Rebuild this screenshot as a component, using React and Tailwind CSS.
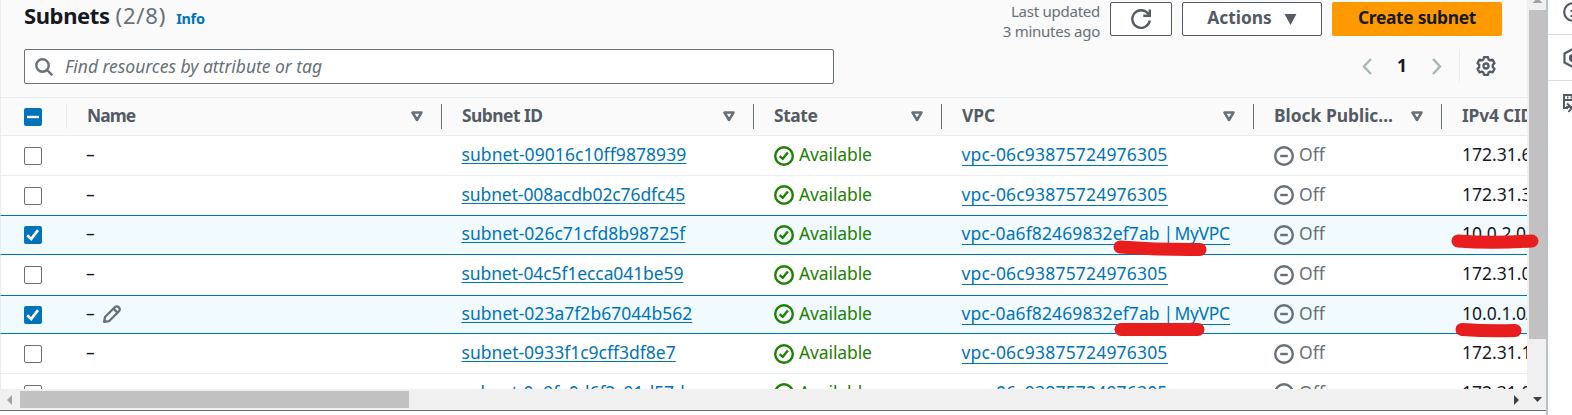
const rows = [
  { id: 'subnet-09016c10ff9878939', vpc: 'vpc-06c93875724976305', ip: '172.31.64.0/20', h: 'h-[40px]', pt: 'pt-[10px]', line: 'border-b-[#eaeded]', track: 'tracking-[0.07px]' },
  { id: 'subnet-008acdb02c76dfc45', vpc: 'vpc-06c93875724976305', ip: '172.31.32.0/20', h: 'h-[40px]', pt: 'pt-[10px]', line: 'border-b-[#0073bb]', track: 'tracking-[-0.1px]', up: true },
  { id: 'subnet-026c71cfd8b98725f', vpc: 'vpc-0a6f82469832ef7ab', name: 'MyVPC', ip: '10.0.2.0/24', h: 'h-[39px]', pt: 'pt-[9px]', line: 'border-b-[#0073bb]', track: 'tracking-[0.03px]', sel: true },
  { id: 'subnet-04c5f1ecca041be59', vpc: 'vpc-06c93875724976305', ip: '172.31.0.0/20', h: 'h-[41px]', pt: 'pt-[10px]', line: 'border-b-[#0073bb]', track: 'tracking-[-0.1px]' },
  { id: 'subnet-023a7f2b67044b562', vpc: 'vpc-0a6f82469832ef7ab', name: 'MyVPC', ip: '10.0.1.0/24', h: 'h-[38px]', pt: 'pt-[9px]', line: 'border-b-[#0073bb]', track: 'tracking-[0.03px]', sel: true, edit: true, up: true },
  { id: 'subnet-0933f1c9cff3df8e7', vpc: 'vpc-06c93875724976305', ip: '172.31.16.0/20', h: 'h-[40px]', pt: 'pt-[10px]', line: 'border-b-[#eaeded]', track: 'tracking-normal' },
  { id: 'subnet-0a9fe0d6f2c91d57d', vpc: 'vpc-06c93875724976305', ip: '172.31.80.0/20', h: 'h-[40px]', pt: 'pt-[10px]', line: 'border-b-[#eaeded]', track: 'tracking-[-0.08px]', up: true },
];

function Check({ state }) {
  if (!state) return <span className="block size-[18px] rounded-[2px] border border-[#687078] bg-white" />;
  return (
    <span className="block size-[18px] rounded-[2px] bg-[#0073bb]">
      <svg viewBox="0 0 18 18" className="block size-full" fill="none" stroke="white">
        {state === 'some' ? <path d="M3 9h12" strokeWidth="2.4" /> : <path d="M3.2 9.2 7.2 13 14 4.2" strokeWidth="2.7" />}
      </svg>
    </span>
  );
}

function StatusIcon({ ok, up }) {
  return (
    <svg viewBox="0 0 20 20" className={`${up ? '-mt-px' : ''} block size-5 shrink-0`} fill="none" stroke="currentColor" strokeWidth="2.4">
      <circle cx="10" cy="10" r="8.8" />
      {ok ? <path d="M5.6 10.2 8.7 12.8 13.9 6.6" /> : <path d="M6.2 10h7.6" />}
    </svg>
  );
}

function HeadCell({ w, label, track = 'tracking-normal', sort = true }) {
  return (
    <div className={`${w} flex h-full shrink-0 items-center pl-[20px]`}>
      <span className={`${track} flex-1 whitespace-nowrap pb-[3px] text-[17.4px] font-bold leading-5 text-[#545b64]`}>{label}</span>
      {sort && (
        <svg viewBox="0 0 12 11" className="mr-[18px] block h-[11px] w-[12px]" fill="none" stroke="#687078" strokeWidth="2.5" strokeLinejoin="round">
          <path d="M1.5 1.5h9L6 9z" />
        </svg>
      )}
      {sort && <span className="h-[25px] w-px bg-[#687078]" />}
    </div>
  );
}

function Row({ r }) {
  return (
    <div className={`${r.h} ${r.pt} ${r.line} ${r.sel ? 'bg-[#f1faff]' : 'bg-white'} flex shrink-0 items-start overflow-hidden border-b border-l border-l-[#eaeded] text-[17.5px] leading-4`}>
      <div className="w-[66px] shrink-0 pl-[23px] pt-px"><Check state={r.sel} /></div>
      <div className="flex w-[375px] shrink-0 gap-[7px] pl-[19px] text-[#16191f]">
        <span className="w-[10px]">–</span>
        {r.edit && (
          <svg viewBox="0 0 18 18" className="block size-[18px]" fill="none" stroke="#687078" strokeWidth="2.3" strokeLinejoin="round">
            <path d="M1.2 16.8 2 12 12 2q2-1.4 3.8.4t.2 3.8L6 16.2z" />
            <path d="m10.5 3.6 4 4" />
          </svg>
        )}
      </div>
      <div className="w-[312px] shrink-0 pl-[19.5px] text-[#0073bb]">
        <span className={`${r.track} whitespace-nowrap underline decoration-1 underline-offset-2 [text-decoration-skip-ink:none]`}>{r.id}</span>
      </div>
      <div className="flex w-[188px] shrink-0 gap-[5px] pl-5 text-[#1d8102]">
        <StatusIcon ok up={r.up} /><span className="tracking-[-0.12px]">Available</span>
      </div>
      <div className="w-[312px] shrink-0 pl-[19.5px] text-[#0073bb]">
        <span className="block h-5 w-fit whitespace-nowrap border-b border-[#0073bb]">
          <span className={r.name ? 'tracking-[0.1px]' : 'tracking-[0.18px]'}>{r.vpc}</span>
          {r.name && <span className="tracking-[-0.7px]"> | </span>}
          {r.name && <span className="-ml-[2px] tracking-[-0.3px]">{r.name}</span>}
        </span>
      </div>
      <div className="flex w-[188px] shrink-0 gap-[5px] pl-5 text-[#687078]">
        <StatusIcon up={r.up} /><span>Off</span>
      </div>
      <div className="shrink-0 whitespace-nowrap pl-[20px] text-[#16191f]">{r.ip}</div>
    </div>
  );
}

export default function App() {
  return (
    <div className="relative flex h-[415px] w-[1572px] overflow-hidden bg-white font-['Noto_Sans',sans-serif]">
      <div className="flex w-[1546px] shrink-0 flex-col">
        <div className="flex h-[389px]">
          <div className="flex w-[1527px] shrink-0 flex-col overflow-hidden">
            <div className="flex h-[97px] shrink-0 border-l border-[#eaeded] bg-[#fafafa] pl-[23px] pr-[25px]">
              <div className="w-[810px]">
                <div className="flex h-[49px] items-baseline">
                  <h1 className="text-[22px] font-bold leading-[31px] tracking-[-0.4px] text-[#16191f]">Subnets</h1>
                  <span className="ml-[6px] text-[22px] leading-[31px] tracking-[0.8px] text-[#687078]">(2/8)</span>
                  <a className="ml-[10px] text-[14.5px] font-bold tracking-[-0.3px] text-[#0073bb]">Info</a>
                </div>
                <div className="flex h-[35px] items-center rounded-[2px] border border-[#687078] bg-white pl-[10px]">
                  <svg viewBox="0 0 18 18" className="block size-[18px]" fill="none" stroke="#687078" strokeWidth="2.4">
                    <circle cx="7.5" cy="7.5" r="6.2" /><path d="m12 12 5.3 5.3" />
                  </svg>
                  <span className="ml-3 text-[17.5px] italic tracking-[-0.03px] text-[#687078]">Find resources by attribute or tag</span>
                </div>
              </div>
              <div className="flex flex-1 flex-col items-end">
                <div className="flex h-[49px] pt-[2px]">
                  <p className="-mt-px mr-[10px] text-right text-[15px] leading-5 tracking-[-0.25px] text-[#687078]">Last updated<br />3 minutes ago</p>
                  <button className="mr-[10px] flex h-[34px] w-[62px] items-center justify-center rounded-[2px] border border-[#545b64] bg-white">
                    <svg viewBox="0 0 20 20" className="block size-5" fill="none" stroke="#545b64" strokeWidth="2.4">
                      <path d="M18.8 11.5A8.8 8.8 0 1 1 17 4.5l1.8 2" /><path d="M18.8 .5v6.3h-6.5" />
                    </svg>
                  </button>
                  <button className="mr-[10px] flex h-[34px] w-[140px] items-center justify-center gap-[12px] rounded-[2px] border border-[#545b64] bg-white text-[17.4px] font-bold text-[#545b64]">
                    <span className="pb-[3px]">Actions</span>
                    <svg viewBox="0 0 13 12" className="block h-[11px] w-[13px]" fill="#545b64"><path d="M0 0h13L6.5 12z" /></svg>
                  </button>
                  <button className="h-[34px] w-[170px] rounded-[2px] bg-[#ff9900] pb-[3px] text-[17.4px] font-bold tracking-[-0.3px] text-[#16191f]">Create subnet</button>
                </div>
                <div className="flex h-[34px] items-center pr-[6px]">
                  <svg viewBox="0 0 10 17" className="block h-[17px] w-[10px]" fill="none" stroke="#aab7b8" strokeWidth="2.5"><path d="M9 1 2 8.5 9 16" /></svg>
                  <span className="w-[60px] pb-[2px] text-center text-[17.4px] font-bold text-[#16191f]">1</span>
                  <svg viewBox="0 0 10 17" className="block h-[17px] w-[10px]" fill="none" stroke="#aab7b8" strokeWidth="2.5"><path d="m1 1 7 7.5L1 16" /></svg>
                  <span className="ml-[17px] mr-[16px] h-[34px] w-px bg-[#eaeded]" />
                  <svg viewBox="0 0 20 20" className="block size-5" fill="none" stroke="#545b64" strokeWidth="2.3" strokeLinejoin="round">
                    <path d="M8 1.2h4l.6 2.3 1.6.9 2.3-.7 2 3.4-1.7 1.7v2.4l1.7 1.7-2 3.4-2.3-.7-1.600.9-.6 2.3H8l-.6-2.3-1.600-.9-2.3.7-2-3.4 1.700-1.700V8.800L1.500 7.100l2-3.400 2.300.7 1.600-.9z" />
                    <circle cx="10" cy="10" r="2.5" />
                  </svg>
                </div>
              </div>
            </div>
            <div className="flex h-[39px] shrink-0 items-center border-y border-l border-[#eaeded] bg-[#fafafa]">
              <div className="flex w-[66px] shrink-0 items-center pl-[23px]"><Check state="some" /><span className="ml-[24px] h-[25px] w-px bg-[#eaeded]" /></div>
              <HeadCell w="w-[375px]" label="Name" track="tracking-[-0.9px]" />
              <HeadCell w="w-[312px]" label="Subnet ID" track="tracking-[-0.53px]" />
              <HeadCell w="w-[188px]" label="State" track="tracking-[-0.4px]" />
              <HeadCell w="w-[312px]" label="VPC" />
              <HeadCell w="w-[188px]" label="Block Public..." />
              <HeadCell w="w-[200px]" label="IPv4 CIDR" track="tracking-[-0.2px]" sort={false} />
            </div>
            {rows.map((r) => <Row key={r.id} r={r} />)}
          </div>
          <div className="flex flex-1 flex-col items-center bg-[#f0f0f0] pl-[2px]">
            <svg viewBox="0 0 17 10" className="block h-[10px] w-[17px] shrink-0" fill="#a3a3a3"><path d="M3.5 3 8.5-2l5 5z" /></svg>
            <div className="h-[329px] w-[17px] bg-[#c1c1c1]" />
          </div>
        </div>
        <div className="flex h-[22px] shrink-0 items-start border-b border-[#687078] bg-[#f0f0f0] pt-[2px]">
          <svg viewBox="0 0 20 17" className="block h-[17px] w-5" fill="#a3a3a3"><path d="M12 4v10L7 9z" /></svg>
          <div className="h-[17px] w-[389px] bg-[#c1c1c1]" />
          <svg viewBox="0 0 40 17" className="ml-auto block h-[17px] w-10" fill="#404040"><path d="M8 4v10l5-5zM27 6h9l-4.5 5z" /></svg>
        </div>
      </div>
      <div className="w-[2px] shrink-0 bg-[#b9c2c6]" />
      <div className="flex flex-1 flex-col overflow-hidden text-[#545b64]">
        <div className="h-[35px] shrink-0 border-b border-[#d5dbdb] pl-[15px] pt-[2px]">
          <svg viewBox="0 0 20 20" className="block size-5" fill="none" stroke="currentColor" strokeWidth="2.2"><circle cx="10" cy="10" r="8.8" /><path d="M10 8.5v6M7.5 9H10M7.5 14h5M9 5.5h2" /></svg>
        </div>
        <div className="h-[46px] shrink-0 border-b border-[#d5dbdb] pl-[15px] pt-[13px]">
          <svg viewBox="0 0 20 20" className="block size-5" fill="none" stroke="currentColor" strokeWidth="2.2"><path d="M10 1 1.5 5.500v9L10 19l8.5-4.500v-9z" /><circle cx="10" cy="10" r="3" fill="currentColor" /></svg>
        </div>
        <div className="pl-[15px] pt-[13px]">
          <svg viewBox="0 0 20 20" className="block size-5" fill="none" stroke="currentColor" strokeWidth="2"><path d="M5 14H1V1h18v12M1 6h18M4 3.5h1.500M7.500 3.500H9M4 9.500l4.500 4M3 13h6.500M5.500 18 9 13.500" /></svg>
        </div>
      </div>
      <svg viewBox="0 0 1572 415" className="pointer-events-none absolute inset-0" fill="none" stroke="#e81d1d" strokeWidth="13" strokeLinecap="round" strokeLinejoin="round">
        <path d="M1120 247 Q1160 250 1200 249.5" />
        <path d="M1121 329.5H1198" />
        <path d="M1458 241 Q1490 243.5 1532 241" />
        <path d="M1462 329.5 Q1490 331.5 1515 330.5" />
      </svg>
    </div>
  );
}
